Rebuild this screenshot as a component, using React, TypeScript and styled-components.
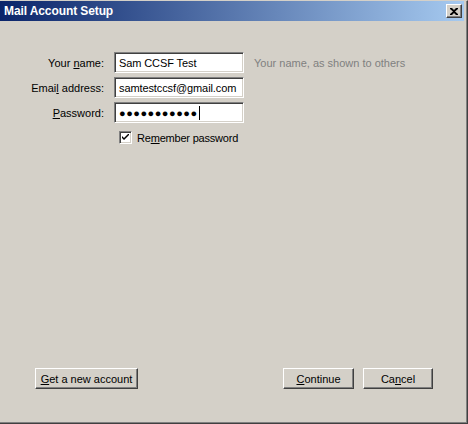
import React from "react";
import styled, { createGlobalStyle } from "styled-components";

const Global = createGlobalStyle`
  html, body { margin: 0; padding: 0; background: #d4d0c8; }
  body { font-family: Tahoma, "Liberation Sans", Arial, sans-serif; font-size: 11px; color: #000; }
`;

const Frame = styled.div`
  width: 468px;
  height: 424px;
  box-sizing: border-box;
  background: #d4d0c8;
  border-top: 1px solid #d4d0c8;
  border-right: 1px solid #404040;
  border-bottom: 1px solid #404040;
  box-shadow: inset -1px -1px 0 #808080;
  padding: 0 3px 3px 0;
  display: flex;
  flex-direction: column;
`;

const TitleBar = styled.div`
  height: 20px;
  flex: none;
  display: flex;
  align-items: center;
  justify-content: space-between;
  padding: 0 2px 0 4px;
  background: linear-gradient(to right, #0a246a, #a6caf0);
`;

const Title = styled.span`
  color: #fff;
  font-weight: bold;
  font-size: 12px;
  letter-spacing: -0.1px;
`;

const CloseBtn = styled.div`
  width: 16px;
  height: 14px;
  box-sizing: border-box;
  background: #d4d0c8;
  border-top: 1px solid #fff;
  border-left: 1px solid #fff;
  border-right: 1px solid #404040;
  border-bottom: 1px solid #404040;
  box-shadow: inset -1px -1px 0 #808080;
  display: flex;
  align-items: center;
  justify-content: center;
`;

const Body = styled.div`
  flex: 1;
  display: flex;
  flex-direction: column;
  justify-content: space-between;
  padding: 31px 0 31px 0;
`;

const Form = styled.div`
  display: grid;
  grid-template-columns: 104px 130px auto;
  column-gap: 10px;
  row-gap: 4px;
  align-items: center;
`;

const Label = styled.label`
  text-align: right;
  white-space: nowrap;
`;

const Input = styled.div`
  height: 21px;
  box-sizing: border-box;
  background: #fff;
  border-top: 1px solid #808080;
  border-left: 1px solid #808080;
  border-right: 1px solid #fff;
  border-bottom: 1px solid #fff;
  box-shadow: inset 1px 1px 0 #404040, inset -1px -1px 0 #d4d0c8;
  padding: 0 4px;
  display: flex;
  align-items: center;
  white-space: nowrap;
  overflow: hidden;
  letter-spacing: -0.1px;
`;

const Dots = styled.span`
  font-size: 11px;
  letter-spacing: 0.5px;
  font-weight: bold;
`;

const Caret = styled.span`
  display: inline-block;
  width: 1px;
  height: 14px;
  background: #000;
  margin-left: 1px;
`;

const Hint = styled.span`
  color: #808080;
  white-space: nowrap;
`;

const CheckRow = styled.div`
  grid-column: 2 / 4;
  display: flex;
  align-items: center;
  gap: 5px;
  padding-left: 5px;
  margin-top: 4px;
  letter-spacing: -0.2px;
`;

const Box = styled.div`
  width: 13px;
  height: 13px;
  box-sizing: border-box;
  background: #fff;
  border-top: 1px solid #808080;
  border-left: 1px solid #808080;
  border-right: 1px solid #fff;
  border-bottom: 1px solid #fff;
  box-shadow: inset 1px 1px 0 #404040, inset -1px -1px 0 #d4d0c8;
  display: flex;
  align-items: center;
  justify-content: center;
`;

const Buttons = styled.div`
  display: flex;
  align-items: center;
  padding: 0 31px 0 35px;
`;

const Button = styled.div<{ $w: number; $ml?: number }>`
  width: ${(p) => p.$w}px;
  margin-left: ${(p) => p.$ml ?? 0}px;
  height: 21px;
  box-sizing: border-box;
  background: #d4d0c8;
  border-top: 1px solid #fff;
  border-left: 1px solid #fff;
  border-right: 1px solid #404040;
  border-bottom: 1px solid #404040;
  box-shadow: inset -1px -1px 0 #808080;
  display: flex;
  align-items: center;
  justify-content: center;
`;

const Spacer = styled.div`
  flex: 1;
`;

const U = styled.span`
  text-decoration: underline;
`;

export default function App() {
  return (
    <>
      <Global />
      <Frame>
        <TitleBar>
          <Title>Mail Account Setup</Title>
          <CloseBtn>
            <svg width="8" height="7" viewBox="0 0 8 7">
              <path d="M0 0h2l2 2 2-2h2v1L5 3.5 8 6v1H6L4 5 2 7H0V6l3-2.5L0 1z" fill="#000" />
            </svg>
          </CloseBtn>
        </TitleBar>
        <Body>
          <Form>
            <Label>Your <U>n</U>ame:</Label>
            <Input>Sam CCSF Test</Input>
            <Hint>Your name, as shown to others</Hint>

            <Label>Emai<U>l</U> address:</Label>
            <Input>samtestccsf@gmail.com</Input>
            <span />

            <Label><U>P</U>assword:</Label>
            <Input>
              <Dots>●●●●●●●●●●●</Dots>
              <Caret />
            </Input>
            <span />

            <CheckRow>
              <Box>
                <svg width="7" height="7" viewBox="0 0 7 7">
                  <path d="M0 2l2 2 5-5v2L2 6 0 4z" fill="#000" />
                </svg>
              </Box>
              <span>Re<U>m</U>ember password</span>
            </CheckRow>
          </Form>
          <Buttons>
            <Button $w={103}><span><U>G</U>et a new account</span></Button>
            <Spacer />
            <Button $w={71}><span><U>C</U>ontinue</span></Button>
            <Button $w={70} $ml={9}><span>Ca<U>n</U>cel</span></Button>
          </Buttons>
        </Body>
      </Frame>
    </>
  );
}
